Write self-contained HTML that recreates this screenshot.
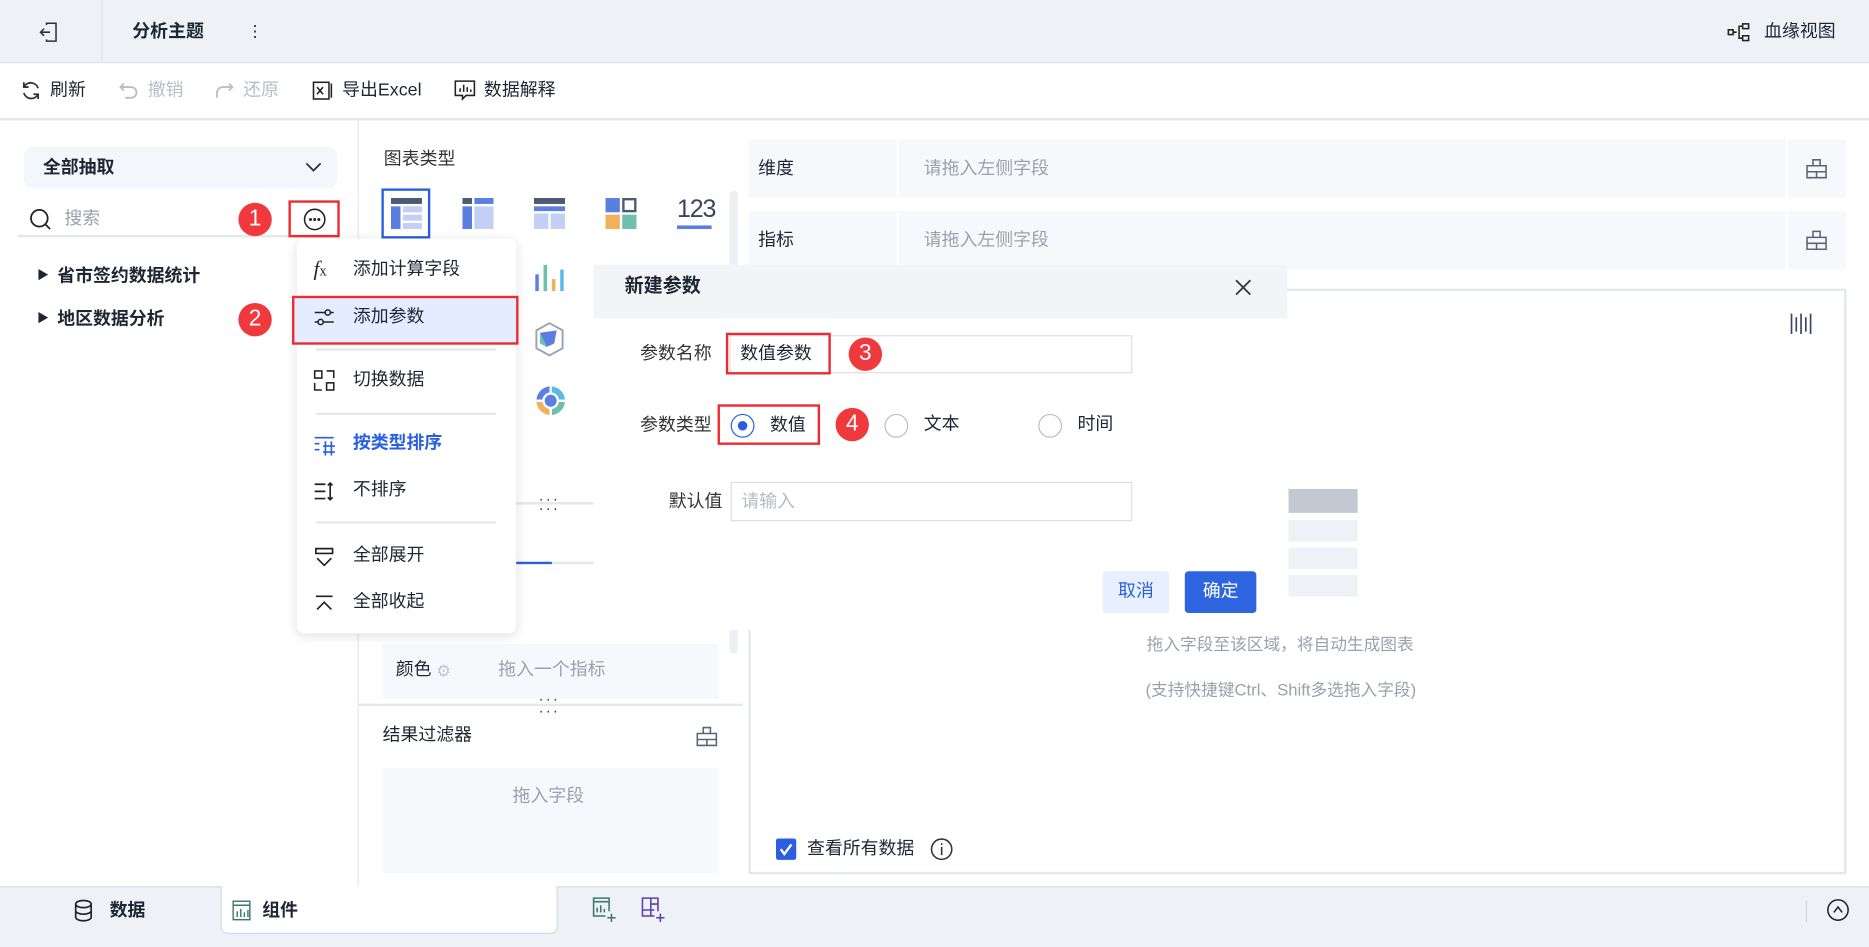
<!DOCTYPE html>
<html><head><meta charset="utf-8">
<style>
*{margin:0;padding:0;box-sizing:border-box}
html,body{width:1869px;height:947px;overflow:hidden;background:#fff}
#w{position:absolute;left:0;top:0;width:1568px;height:794px;transform:scale(1.19196,1.1927);transform-origin:0 0;font-family:"Liberation Sans","Noto Sans CJK SC",sans-serif;font-size:15px;color:#1f2633}
.a{position:absolute}
.t{position:absolute;white-space:nowrap;line-height:20px}
.badge{position:absolute;width:28px;height:28px;border-radius:50%;background:#f0393c;color:#fff;font-size:19px;text-align:center;line-height:28px}
.red{position:absolute;border:2px solid #ee2a2f}
.g{color:#9aa1ad}
.dv{position:absolute;height:1px;background:#e4e7ec}
</style></head><body><div id="w">
<!-- top bar -->
<div class="a" style="left:0;top:0;width:1568px;height:53px;background:#eef1f6;border-bottom:1px solid #e0e4ea"></div>
<div class="a" style="left:85px;top:0;width:1px;height:53px;background:#e0e4ea"></div>
<svg class="a" style="left:32px;top:18px" width="18" height="18" viewBox="0 0 18 18" fill="none" stroke="#333" stroke-width="1.3"><path d="M7 3V1.5h8v15H7V15M2 9h8M5 6L2 9l3 3"/></svg>
<div class="t" style="left:111px;top:17px;font-weight:bold;font-size:15px">分析主题</div>
<div class="t" style="left:207px;top:16px;font-size:14px">⋮</div>
<svg class="a" style="left:1449px;top:19px" width="20" height="16" viewBox="0 0 20 16" fill="none" stroke="#222" stroke-width="1.3"><rect x="1" y="6" width="4" height="4"/><rect x="13" y="1" width="5" height="4"/><rect x="13" y="11" width="5" height="4"/><path d="M5 8h3M13 3h-3v10h3"/></svg>
<div class="t" style="left:1480px;top:17px">血缘视图</div>
<!-- toolbar -->
<div class="dv" style="left:0;top:99px;width:1568px;height:2px"></div>
<svg class="a" style="left:17px;top:67px" width="18" height="18" viewBox="0 0 18 18" fill="none" stroke="#333" stroke-width="1.5"><path d="M15 7A6.5 6.5 0 0 0 3 6M3 11a6.5 6.5 0 0 0 12 1M3 2v4h4M15 16v-4h-4"/></svg>
<div class="t" style="left:42px;top:66px">刷新</div>
<svg class="a" style="left:99px;top:67px" width="18" height="18" viewBox="0 0 18 18" fill="none" stroke="#b8bdc6" stroke-width="1.5"><path d="M5 3L2 6l3 3M2 6h9a4.5 4.5 0 0 1 0 9H6"/></svg>
<div class="t" style="left:124px;top:66px;color:#b8bdc6">撤销</div>
<svg class="a" style="left:179px;top:67px" width="18" height="18" viewBox="0 0 18 18" fill="none" stroke="#b8bdc6" stroke-width="1.5"><path d="M13 3l3 3-3 3M16 6H8a5 5 0 0 0-5 5v4"/></svg>
<div class="t" style="left:204px;top:66px;color:#b8bdc6">还原</div>
<svg class="a" style="left:262px;top:67px" width="18" height="18" viewBox="0 0 18 18" fill="none" stroke="#222" stroke-width="1.3"><rect x="1" y="2" width="13" height="14"/><path d="M4 6l5 6M9 6l-5 6M16 3v12"/></svg>
<div class="t" style="left:287px;top:66px">导出Excel</div>
<svg class="a" style="left:381px;top:67px" width="18" height="18" viewBox="0 0 18 18" fill="none" stroke="#222" stroke-width="1.3"><path d="M1 1h16v12H10l-3 3v-3H1z"/><path d="M5 10V7M8 10V4M11 10V6M14 10V8"/></svg>
<div class="t" style="left:406px;top:66px">数据解释</div>
<!-- left panel -->
<div class="a" style="left:300px;top:101px;width:1px;height:642px;background:#e4e7ec"></div>
<div class="a" style="left:20px;top:123px;width:263px;height:35px;border-radius:8px;background:#f3f6fb"></div>
<div class="t" style="left:36px;top:131px;font-weight:bold">全部抽取</div>
<svg class="a" style="left:255px;top:134px" width="16" height="12" viewBox="0 0 16 12" fill="none" stroke="#333" stroke-width="1.5"><path d="M2 3l6 6 6-6"/></svg>
<svg class="a" style="left:24px;top:174px" width="20" height="20" viewBox="0 0 20 20" fill="none" stroke="#222" stroke-width="1.5"><circle cx="9" cy="9" r="7"/><path d="M14 14l4 4"/></svg>
<div class="t g" style="left:54px;top:174px">搜索</div>
<div class="a" style="left:15px;top:197px;width:230px;height:2px;background:#e4e7ec"></div>
<div class="badge" style="left:200px;top:170px">1</div>
<div class="red" style="left:242px;top:168px;width:43px;height:31px"></div>
<svg class="a" style="left:254px;top:174px" width="20" height="20" viewBox="0 0 20 20" fill="none" stroke="#222" stroke-width="1.3"><circle cx="10" cy="10" r="8.5"/><circle cx="6.5" cy="10" r=".6" fill="#222"/><circle cx="10" cy="10" r=".6" fill="#222"/><circle cx="13.5" cy="10" r=".6" fill="#222"/></svg>
<div class="t" style="left:31px;top:222px;font-size:10px">▶</div>
<div class="t" style="left:48px;top:222px;font-weight:bold">省市签约数据统计</div>
<div class="t" style="left:31px;top:258px;font-size:10px">▶</div>
<div class="t" style="left:48px;top:258px;font-weight:bold">地区数据分析</div>
<div class="badge" style="left:200px;top:254px">2</div>
<!-- middle panel -->
<div class="t" style="left:322px;top:124px;color:#333">图表类型</div>
<div class="a" style="left:320px;top:158px;width:41px;height:42px;border:2px solid #2a5fe0"></div>
<svg class="a" style="left:328px;top:166px" width="26" height="26"><rect x="0" y="0" width="26" height="5" fill="#4d5a73"/><rect x="0" y="7" width="8" height="19" fill="#5b7fe0"/><rect x="10" y="7" width="16" height="5" fill="#c3cff5"/><rect x="10" y="14" width="16" height="5" fill="#c3cff5"/><rect x="10" y="21" width="16" height="5" fill="#c3cff5"/></svg>
<svg class="a" style="left:388px;top:166px" width="26" height="26"><rect x="0" y="0" width="8" height="5" fill="#4d5a73"/><rect x="10" y="0" width="16" height="5" fill="#5b7fe0"/><rect x="0" y="7" width="8" height="19" fill="#5b7fe0"/><rect x="10" y="7" width="16" height="19" fill="#c3cff5"/></svg>
<svg class="a" style="left:448px;top:166px" width="26" height="26"><rect x="0" y="0" width="26" height="5" fill="#4d5a73"/><rect x="0" y="7" width="26" height="4" fill="#5b7fe0"/><rect x="0" y="13" width="12" height="13" fill="#c3cff5"/><rect x="14" y="13" width="12" height="13" fill="#c3cff5"/></svg>
<svg class="a" style="left:508px;top:166px" width="26" height="26"><rect x="0" y="0" width="12" height="12" fill="#5b7fe0"/><rect x="15" y="1" width="10" height="10" fill="none" stroke="#4d5a73" stroke-width="2"/><rect x="0" y="14" width="12" height="12" fill="#f0b15a"/><rect x="14" y="14" width="12" height="12" fill="#6fc0b0"/></svg>
<div class="t" style="left:568px;top:166px;font-size:21px;color:#3a4660;letter-spacing:-1px">123</div>
<div class="a" style="left:568px;top:189px;width:29px;height:3px;background:#5b7fe0"></div>
<svg class="a" style="left:449px;top:222px" width="24" height="22"><rect x="0" y="8" width="3" height="14" fill="#5b7fe0"/><rect x="7" y="0" width="3" height="22" fill="#6fc0b0"/><rect x="14" y="12" width="3" height="10" fill="#f0b15a"/><rect x="21" y="4" width="3" height="18" fill="#5bb8e8"/></svg>
<svg class="a" style="left:448px;top:270px" width="26" height="30" viewBox="0 0 26 30"><path d="M13 1l11 6v15l-11 6L2 22V7z" fill="none" stroke="#9aa3b5" stroke-width="1.6"/><path d="M5 9l14-2-2 11-7 3z" fill="#5b7fe0"/><path d="M5 9l6 12-6-3z" fill="#6fc0b0"/></svg>
<svg class="a" style="left:448px;top:322px" width="28" height="28" viewBox="0 0 28 28"><path d="M14 2A12 12 0 0 0 2 14h5a7 7 0 0 1 7-7z" fill="#5b7fe0"/><path d="M14 2a12 12 0 0 1 12 12h-5a7 7 0 0 0-7-7z" fill="#5bb8e8"/><path d="M2 14a12 12 0 0 0 12 12v-5a7 7 0 0 1-7-7z" fill="#f0b15a"/><path d="M26 14a12 12 0 0 1-12 12v-5a7 7 0 0 0 7-7z" fill="#6fc0b0"/><rect x="13" y="2" width="2" height="24" fill="#fff"/><rect x="2" y="13" width="24" height="2" fill="#fff"/><circle cx="14" cy="14" r="5" fill="#5b7fe0"/></svg>
<div class="a" style="left:612px;top:160px;width:7px;height:388px;border-radius:4px;background:#eceff3"></div>
<div class="a" style="left:433px;top:421px;width:65px;height:2px;background:#e4e7ec"></div>
<div class="t" style="left:452px;top:408px;font-size:12px;letter-spacing:2px">···<br></div>
<div class="t" style="left:452px;top:416px;font-size:12px;letter-spacing:2px">···</div>
<div class="a" style="left:433px;top:471px;width:65px;height:2px;background:#e4e7ec"></div>
<div class="a" style="left:433px;top:471px;width:30px;height:2px;background:#2a5fe0"></div>
<div class="a" style="left:321px;top:540px;width:282px;height:46px;background:#f6f8fb"></div>
<div class="t" style="left:332px;top:552px">颜色</div>
<div class="t" style="left:366px;top:552px;color:#c0c5ce;font-size:14px">⚙</div>
<div class="t g" style="left:418px;top:552px">拖入一个指标</div>
<div class="a" style="left:300px;top:590px;width:323px;height:2px;background:#e4e7ec"></div>
<div class="t" style="left:452px;top:576px;font-size:12px;letter-spacing:2px">···</div>
<div class="t" style="left:452px;top:586px;font-size:12px;letter-spacing:2px">···</div>
<div class="t" style="left:321px;top:607px">结果过滤器</div>
<svg class="a" style="left:584px;top:608px" width="18" height="18" viewBox="0 0 18 18" fill="none" stroke="#5a6478" stroke-width="1.3"><path d="M1 7h16v10H1zM6 7V2h6v5M1 12h16M9 12v5"/></svg>
<div class="a" style="left:321px;top:644px;width:282px;height:88px;background:#f6f8fb"></div>
<div class="t g" style="left:430px;top:658px">拖入字段</div>
<!-- right area -->
<div class="a" style="left:628px;top:117px;width:921px;height:49px;background:#f6f8fb"></div>
<div class="a" style="left:752px;top:117px;width:2px;height:49px;background:#fff"></div>
<div class="a" style="left:1498px;top:119px;width:2px;height:47px;background:#fff"></div>
<div class="t" style="left:636px;top:132px">维度</div>
<div class="t g" style="left:775px;top:132px">请拖入左侧字段</div>
<svg class="a" style="left:1515px;top:132px" width="18" height="18" viewBox="0 0 18 18" fill="none" stroke="#5a6478" stroke-width="1.3"><path d="M1 7h16v10H1zM6 7V2h6v5M1 12h16M9 12v5"/></svg>
<div class="a" style="left:628px;top:177px;width:921px;height:49px;background:#f6f8fb"></div>
<div class="a" style="left:752px;top:177px;width:2px;height:49px;background:#fff"></div>
<div class="a" style="left:1498px;top:179px;width:2px;height:47px;background:#fff"></div>
<div class="t" style="left:636px;top:192px">指标</div>
<div class="t g" style="left:775px;top:192px">请拖入左侧字段</div>
<svg class="a" style="left:1515px;top:192px" width="18" height="18" viewBox="0 0 18 18" fill="none" stroke="#5a6478" stroke-width="1.3"><path d="M1 7h16v10H1zM6 7V2h6v5M1 12h16M9 12v5"/></svg>
<div class="a" style="left:628px;top:242px;width:921px;height:491px;border:2px solid #e3e7ee"></div>
<svg class="a" style="left:1502px;top:262px" width="18" height="18" viewBox="0 0 18 18" stroke="#3a4660" stroke-width="1.4"><path d="M1 1v17M5 4v12M9 1v17M13 4v12M17 1v17"/></svg>
<div class="a" style="left:1081px;top:410px;width:58px;height:20px;background:#c3c9d3"></div>
<div class="a" style="left:1081px;top:436px;width:58px;height:18px;background:#eef1f5"></div>
<div class="a" style="left:1081px;top:459px;width:58px;height:18px;background:#eef1f5"></div>
<div class="a" style="left:1081px;top:482px;width:58px;height:18px;background:#eef1f5"></div>
<div class="t g" style="left:962px;top:530px;font-size:14px">拖入字段至该区域，将自动生成图表</div>
<div class="t g" style="left:961px;top:568px;font-size:14px">(支持快捷键Ctrl、Shift多选拖入字段)</div>
<div class="a" style="left:651px;top:703px;width:17px;height:18px;border-radius:2px;background:#2a5fe0"></div>
<svg class="a" style="left:651px;top:703px" width="17" height="18"><path d="M4 9l3 4 6-8" fill="none" stroke="#fff" stroke-width="2"/></svg>
<div class="t" style="left:677px;top:702px">查看所有数据</div>
<svg class="a" style="left:780px;top:702px" width="20" height="20" viewBox="0 0 20 20" fill="none" stroke="#333" stroke-width="1.3"><circle cx="10" cy="10" r="8.5"/><path d="M10 8v7M10 5v1.5"/></svg>
<!-- dropdown menu -->
<div class="a" style="left:249px;top:200px;width:184px;height:331px;background:#fff;border-radius:6px;box-shadow:0 2px 10px rgba(0,0,0,.12)"></div>
<div class="t" style="left:263px;top:215px;font-style:italic;font-family:'Liberation Serif',serif;font-size:18px">f<span style="font-size:12px;font-style:normal">x</span></div>
<div class="t" style="left:296px;top:216px">添加计算字段</div>
<div class="a" style="left:246px;top:249px;width:188px;height:40px;background:#e3edff"></div>
<div class="red" style="left:245px;top:248px;width:190px;height:41px"></div>
<svg class="a" style="left:263px;top:258px" width="18" height="16" viewBox="0 0 18 16" fill="none" stroke="#222" stroke-width="1.3"><path d="M1 4h16M1 12h16"/><circle cx="12" cy="4" r="2.2" fill="#e3edff"/><circle cx="6" cy="12" r="2.2" fill="#e3edff"/></svg>
<div class="t" style="left:296px;top:256px">添加参数</div>
<div class="a" style="left:265px;top:292px;width:151px;height:2px;background:#e4e7ec"></div>
<svg class="a" style="left:263px;top:310px" width="18" height="18" viewBox="0 0 18 18" fill="none" stroke="#222" stroke-width="1.3"><rect x="1" y="1" width="6" height="6"/><rect x="11" y="11" width="6" height="6"/><path d="M1 11v6h6M11 1h6v6"/></svg>
<div class="t" style="left:296px;top:309px">切换数据</div>
<div class="a" style="left:265px;top:346px;width:151px;height:2px;background:#e4e7ec"></div>
<svg class="a" style="left:263px;top:364px" width="18" height="18" viewBox="0 0 18 18" fill="none" stroke="#2a5fe0" stroke-width="1.4"><path d="M1 3h16M1 8h4M1 13h4M10 6v12M15 6v12M8 10h10M8 15h10"/></svg>
<div class="t" style="left:296px;top:362px;color:#2a5fe0;font-weight:bold">按类型排序</div>
<svg class="a" style="left:263px;top:403px" width="18" height="18" viewBox="0 0 18 18" fill="none" stroke="#222" stroke-width="1.4"><path d="M1 3h9M1 9h9M1 15h9M14 2v14M12 4l2-2 2 2M12 14l2 2 2-2"/></svg>
<div class="t" style="left:296px;top:401px">不排序</div>
<div class="a" style="left:265px;top:437px;width:151px;height:2px;background:#e4e7ec"></div>
<svg class="a" style="left:263px;top:458px" width="18" height="18" viewBox="0 0 18 18" fill="none" stroke="#222" stroke-width="1.4"><path d="M2 2h14v4H2zM3 10l6 6 6-6"/></svg>
<div class="t" style="left:296px;top:456px">全部展开</div>
<svg class="a" style="left:263px;top:497px" width="18" height="18" viewBox="0 0 18 18" fill="none" stroke="#222" stroke-width="1.4"><path d="M2 3h14M3 14l6-6 6 6"/></svg>
<div class="t" style="left:296px;top:495px">全部收起</div>
<!-- dialog -->
<div class="a" style="left:498px;top:222px;width:582px;height:306px;background:#fff"></div>
<div class="a" style="left:498px;top:222px;width:582px;height:45px;background:#f2f4f7"></div>
<div class="t" style="left:524px;top:231px;font-weight:bold;font-size:16px">新建参数</div>
<svg class="a" style="left:1036px;top:234px" width="14" height="14" stroke="#333" stroke-width="1.5"><path d="M1 1l12 12M13 1L1 13"/></svg>
<div class="t" style="left:537px;top:287px;color:#333">参数名称</div>
<div class="a" style="left:612px;top:281px;width:338px;height:32px;border:1px solid #dcdfe6"></div>
<div class="red" style="left:609px;top:279px;width:88px;height:35px"></div>
<div class="t" style="left:621px;top:287px">数值参数</div>
<div class="badge" style="left:712px;top:283px">3</div>
<div class="t" style="left:537px;top:347px;color:#333">参数类型</div>
<div class="red" style="left:602px;top:339px;width:86px;height:34px"></div>
<div class="a" style="left:613px;top:347px;width:20px;height:20px;border-radius:50%;border:1.5px solid #2a5fe0"></div>
<div class="a" style="left:619px;top:353px;width:8px;height:8px;border-radius:50%;background:#2a5fe0"></div>
<div class="t" style="left:646px;top:347px">数值</div>
<div class="badge" style="left:701px;top:342px">4</div>
<div class="a" style="left:742px;top:347px;width:20px;height:20px;border-radius:50%;border:1.5px solid #b8bec8"></div>
<div class="t" style="left:775px;top:346px">文本</div>
<div class="a" style="left:871px;top:347px;width:20px;height:20px;border-radius:50%;border:1.5px solid #b8bec8"></div>
<div class="t" style="left:904px;top:346px">时间</div>
<div class="t" style="left:561px;top:411px;color:#333">默认值</div>
<div class="a" style="left:613px;top:404px;width:337px;height:33px;border:1px solid #dcdfe6"></div>
<div class="t" style="left:622px;top:411px;color:#b5bac3">请输入</div>
<div class="a" style="left:925px;top:479px;width:56px;height:35px;border-radius:3px;background:#e8efff"></div>
<div class="t" style="left:938px;top:486px;color:#2a5fe0">取消</div>
<div class="a" style="left:994px;top:479px;width:60px;height:35px;border-radius:3px;background:#2f64e0"></div>
<div class="t" style="left:1009px;top:486px;color:#fff">确定</div>
<!-- bottom bar -->
<div class="a" style="left:0;top:743px;width:1568px;height:51px;background:#eef1f6;border-top:1px solid #d9dde4"></div>
<svg class="a" style="left:62px;top:754px" width="16" height="19" viewBox="0 0 16 19" fill="none" stroke="#222" stroke-width="1.4"><ellipse cx="8" cy="4" rx="6.5" ry="3"/><path d="M1.5 4v11c0 1.7 3 3 6.5 3s6.5-1.3 6.5-3V4M1.5 9.5c0 1.7 3 3 6.5 3s6.5-1.3 6.5-3"/></svg>
<div class="t" style="left:92px;top:754px;font-weight:bold">数据</div>
<div class="a" style="left:185px;top:743px;width:283px;height:40px;background:#fff;border:1px solid #d3d8e0;border-top:none;border-radius:0 0 6px 6px"></div>
<svg class="a" style="left:195px;top:755px" width="16" height="17" viewBox="0 0 16 17" fill="none" stroke="#3a7a6a" stroke-width="1.2"><rect x=".6" y=".6" width="14" height="15.5"/><path d="M1 4h14M4 14V9M7 14V7M10 14V10M13 14V8"/></svg>
<div class="t" style="left:220px;top:754px;font-weight:bold">组件</div>
<svg class="a" style="left:497px;top:752px" width="20" height="22" viewBox="0 0 20 22" fill="none" stroke="#3a7a6a" stroke-width="1.3"><path d="M14 12V1H1v15h10M1 4h13M4 13V9M7 13V7M10 13V10M16 14v7M12.5 17.5h7"/></svg>
<svg class="a" style="left:538px;top:752px" width="20" height="22" viewBox="0 0 20 22" fill="none" stroke="#5a3fae" stroke-width="1.3"><path d="M14 12V1H1v15h10M8 1v15M8 6h6M1 11h10M16 14v7M12.5 17.5h7"/></svg>
<div class="a" style="left:1515px;top:755px;width:1px;height:18px;background:#cfd4dc"></div>
<svg class="a" style="left:1532px;top:753px" width="20" height="20" viewBox="0 0 20 20" fill="none" stroke="#222" stroke-width="1.3"><circle cx="10" cy="10" r="8.5"/><path d="M6.5 12L10 7.5l3.5 4.5"/></svg>
</div></body></html>
